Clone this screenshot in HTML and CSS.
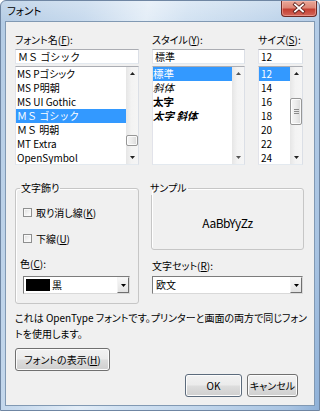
FILE: index.html
```html
<!DOCTYPE html>
<html lang="ja">
<head>
<meta charset="utf-8">
<title>フォント</title>
<link rel="stylesheet" href="styles.css">
</head>
<body>
<div class="window">
  <div class="titlebar">
    <span class="title">フォント</span>
    <span class="close">
      <svg width="36" height="16" viewBox="0 0 36 16">
        <path d="M14 4.5 L22 11.5 M22 4.5 L14 11.5" stroke="#5a1f1a" stroke-width="3.4" stroke-linecap="square" fill="none"/>
        <path d="M14 4.5 L22 11.5 M22 4.5 L14 11.5" stroke="#ffffff" stroke-width="1.8" stroke-linecap="square" fill="none"/>
      </svg>
    </span>
  </div>
  <div class="client">
    <div class="pickers">
      <div class="picker">
        <span class="lbl">フォント名(<u>F</u>):</span>
        <div class="edit fw">ＭＳ ゴシック</div>
        <div class="list">
          <ul class="items">
            <li>MS Pゴシック</li>
            <li>MS P明朝</li>
            <li>MS UI Gothic</li>
            <li class="sel fw">ＭＳ ゴシック</li>
            <li class="fw">ＭＳ 明朝</li>
            <li>MT Extra</li>
            <li>OpenSymbol</li>
          </ul>
          <div class="vscroll">
            <span class="arrow"><svg width="5" height="3" viewBox="0 0 5 3"><polygon points="0,3 2.5,0 5,3" fill="#222"/></svg></span>
            <span class="track"><span class="thumb" style="margin-top:55px;height:11px"></span></span>
            <span class="arrow"><svg width="5" height="3" viewBox="0 0 5 3"><polygon points="0,0 5,0 2.5,3" fill="#222"/></svg></span>
          </div>
        </div>
      </div>
      <div class="picker">
        <span class="lbl">スタイル(<u>Y</u>):</span>
        <div class="edit">標準</div>
        <div class="list">
          <ul class="items styles">
            <li class="sel">標準</li>
            <li class="it">斜体</li>
            <li class="bd">太字</li>
            <li class="bd it">太字 斜体</li>
          </ul>
          <div class="vscroll">
            <span class="arrow"><svg width="5" height="3" viewBox="0 0 5 3"><polygon points="0,3 2.5,0 5,3" fill="#555"/></svg></span>
            <span class="track"></span>
            <span class="arrow"><svg width="5" height="3" viewBox="0 0 5 3"><polygon points="0,0 5,0 2.5,3" fill="#555"/></svg></span>
          </div>
        </div>
      </div>
      <div class="picker">
        <span class="lbl">サイズ(<u>S</u>):</span>
        <div class="edit">12</div>
        <div class="list">
          <ul class="items sizes">
            <li class="sel">12</li>
            <li>14</li>
            <li>16</li>
            <li>18</li>
            <li>20</li>
            <li>22</li>
            <li>24</li>
          </ul>
          <div class="vscroll">
            <span class="arrow"><svg width="5" height="3" viewBox="0 0 5 3"><polygon points="0,3 2.5,0 5,3" fill="#222"/></svg></span>
            <span class="track"><span class="thumb grip" style="margin-top:18px;height:27px"><i></i><i></i><i></i></span></span>
            <span class="arrow"><svg width="5" height="3" viewBox="0 0 5 3"><polygon points="0,0 5,0 2.5,3" fill="#222"/></svg></span>
          </div>
        </div>
      </div>
    </div>

    <div class="middle">
      <fieldset class="group effects">
        <legend>文字飾り</legend>
        <div class="check"><span class="box"></span><span>取り消し線(<u>K</u>)</span></div>
        <div class="check"><span class="box"></span><span>下線(<u>U</u>)</span></div>
        <span class="lbl color-lbl">色(<u>C</u>):</span>
        <div class="combo">
          <span class="swatch"></span><span class="combo-text">黒</span>
          <span class="drop"><svg width="5" height="3" viewBox="0 0 5 3"><polygon points="0,0 5,0 2.5,3" fill="#000"/></svg></span>
        </div>
      </fieldset>
      <div class="right">
        <fieldset class="group sample">
          <legend>サンプル</legend>
          <div class="sample-text">AaBbYyZz</div>
        </fieldset>
        <span class="lbl charset-lbl">文字セット(<u>R</u>):</span>
        <div class="combo wide">
          <span class="combo-text plain">欧文</span>
          <span class="drop"><svg width="5" height="3" viewBox="0 0 5 3"><polygon points="0,0 5,0 2.5,3" fill="#000"/></svg></span>
        </div>
      </div>
    </div>

    <p class="desc">これは OpenType フォントです。プリンターと画面の両方で同じフォン<br>トを使用します。</p>

    <div class="btn show-btn">フォントの表示(<u>H</u>)</div>
    <div class="actions">
      <div class="btn ok">OK</div>
      <div class="btn cancel">キャンセル</div>
    </div>
  </div>
</div>
</body>
</html>
```

FILE: styles.css
```css
* { box-sizing: border-box; }
html, body { margin: 0; padding: 0; width: 320px; height: 411px; overflow: hidden; background: #ffffff; }
body {
  font-family: "Noto Sans CJK JP", "Noto Sans", sans-serif;
  font-size: 10px;
  font-feature-settings: "palt" 1;
  color: #000;
}
u { text-decoration: underline; text-underline-offset: 1px; }

.window {
  width: 320px; height: 411px;
  display: flex; flex-direction: column;
  border: 1px solid #6f86a3;
  border-radius: 6px 6px 0 0;
  padding: 0 4px 4px;
  background:
    linear-gradient(180deg, rgba(255,255,255,0.25) 0px, rgba(255,255,255,0) 22px),
    linear-gradient(100deg, #b3cbe4 0%, #c6d9ed 22%, #e3edf7 38%, #d2e2f2 48%, #c0d5eb 70%, #a9c4e2 92%, #8fb1d8 100%);
}
.titlebar { height: 20px; display: flex; justify-content: space-between; align-items: flex-start; }
.title { padding: 3px 0 0 2px; font-size: 10.5px; line-height: 14px; color: #000; }
.close {
  width: 36px; height: 16px; margin-right: -2px;
  display: block;
  border: 1px solid #6e2a24; border-top: none;
  border-radius: 0 0 4px 4px;
  background: linear-gradient(180deg, #eaa898 0%, #dd8676 45%, #c53f31 55%, #d2665a 100%);
  box-shadow: inset 0 0 0 1px rgba(255,200,190,0.45);
}
.close svg { display: block; margin: -1px 0 0 -1px; }

.client {
  flex: 1;
  display: flex; flex-direction: column;
  background: #f0f0f0;
  border: 1px solid #8199b3;
  padding: 11px 11px 0 9px;
}

.pickers { display: grid; grid-template-columns: 124px 93px 45px; column-gap: 13px; }
.picker { display: flex; flex-direction: column; }
.lbl { display: block; line-height: 14px; height: 14px; white-space: nowrap; }
.edit {
  margin-top: 2px; height: 15px; line-height: 13px;
  padding: 0 2px;
  background: #fff;
  border: 1px solid; border-color: #abadb3 #dbdfe6 #e3e9ef #e2e3ea;
  white-space: nowrap; overflow: hidden;
}
.fw { font-feature-settings: normal; }
.list {
  margin-top: 2px; height: 99px;
  display: flex;
  background: #fff;
  border: 1px solid; border-color: #abadb3 #dbdfe6 #e3e9ef #e2e3ea;
  overflow: hidden;
}
.items { flex: 1; margin: 0; padding: 0; list-style: none; overflow: hidden; min-width: 0; }
.items li { height: 14px; line-height: 13px; padding-left: 1px; white-space: nowrap; }
.items li.sel { background: #3399ff; color: #fff; }
.styles li { font-size: 10.5px; padding-left: 0; }
.styles .it { font-style: italic; }
.styles .bd { font-weight: bold; }
.sizes li { padding-left: 2px; }

.vscroll {
  width: 12px; flex: none;
  display: flex; flex-direction: column;
  background: linear-gradient(90deg, #e6e6e6 0%, #f3f3f3 45%, #f5f5f5 100%);
}
.arrow { height: 13px; flex: none; display: flex; align-items: center; justify-content: center; }
.arrow svg { display: block; }
.track { flex: 1; display: flex; flex-direction: column; }
.thumb {
  display: flex; flex-direction: column; align-items: center; justify-content: center; gap: 1px;
  width: 12px;
  border: 1px solid #979797; border-radius: 2px;
  background: linear-gradient(90deg, #f6f6f6 0%, #ebebeb 50%, #d9d9d9 100%);
  box-shadow: inset 0 0 0 1px rgba(255,255,255,0.8);
}
.grip i { display: block; width: 5px; height: 1px; background: #8a8a8a; }

.middle { margin-top: 16px; display: grid; grid-template-columns: 124px 153px; column-gap: 12px; align-items: start; }
.group {
  margin: 0; min-width: 0;
  border: 1px solid #c6c6c6; border-radius: 3px;
  box-shadow: inset 1px 1px 0 #fff;
}
.group legend { line-height: 14px; padding: 0 1px; margin-left: -3px; }
.effects { height: 123px; padding: 10px 8px 0 7px; }
.check { display: flex; align-items: center; gap: 4px; height: 14px; margin-bottom: 12px; }
.box {
  width: 9px; height: 9px; flex: none;
  border: 1px solid #8e8f8f;
  background: linear-gradient(135deg, #dcdcdc 0%, #f4f4f4 60%, #ffffff 100%);
  box-shadow: inset 0 0 0 1px #f8f8f8;
}
.color-lbl { margin-left: -3px; }
.combo {
  margin-top: 5px; height: 18px;
  display: flex; align-items: center;
  background: #fff;
  border: 1px solid; border-color: #7c7c7c #d9d9d9 #d9d9d9 #7c7c7c;
  padding-left: 2px;
}
.swatch { width: 24px; height: 12px; background: #000; flex: none; }
.combo-text { flex: 1; padding-left: 2px; line-height: 14px; }
.combo-text.plain { padding-left: 1px; }
.drop {
  width: 12px; height: 16px; flex: none;
  display: flex; align-items: center; justify-content: center;
  border: 1px solid; border-color: #f4f4f4 #6f6f6f #6f6f6f #f4f4f4;
  background: linear-gradient(180deg, #f7f7f7 0%, #e2e2e2 100%);
}
.drop svg { display: block; }

.right { display: flex; flex-direction: column; }
.sample { height: 69px; padding: 0; display: flex; }
.sample-text {
  flex: 1; text-align: center;
  padding-top: 20px;
  font-size: 12px; letter-spacing: -0.5px; line-height: 16px;
  font-feature-settings: normal;
}
.charset-lbl { margin-top: 9px; margin-left: 1px; }
.combo.wide { margin: 3px 1px 0 1px; }

.desc { margin: 6px 0 0 0; line-height: 16px; white-space: nowrap; }

.btn {
  height: 23px;
  display: flex; align-items: center; justify-content: center;
  border: 1px solid #707070; border-radius: 3px;
  background: linear-gradient(180deg, #f2f2f2 0%, #ebebeb 48%, #dddddd 52%, #cfcfcf 100%);
  box-shadow: inset 0 0 0 1px #fcfcfc;
  white-space: nowrap;
}
.show-btn { margin-top: 6px; width: 95px; }
.actions { margin-top: 3px; margin-right: 5px; display: flex; justify-content: flex-end; gap: 5px; }
.ok { width: 57px; border-color: #5c6b7c; }
.cancel { width: 51px; }
```
